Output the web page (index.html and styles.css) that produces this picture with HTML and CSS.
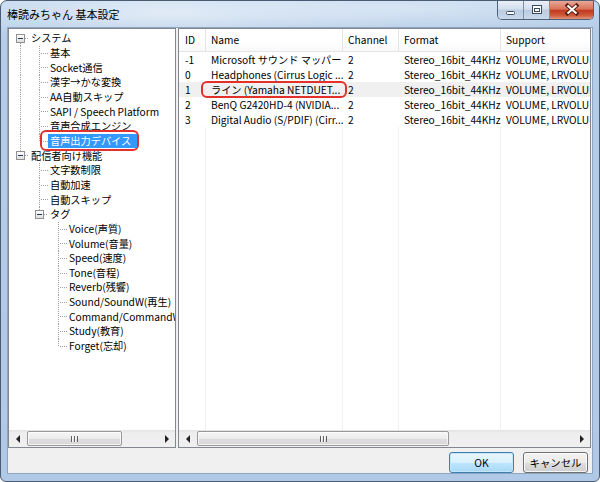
FILE: index.html
```html
<!DOCTYPE html>
<html lang="ja">
<head>
    <meta charset="UTF-8">
    <title>棒読みちゃん 基本設定</title>
    <link rel="stylesheet" href="styles.css">
</head>
<body>

    <div class="window">
        <div class="titlebar">
            <span class="title">棒読みちゃん 基本設定</span>
            <div class="caption-buttons">
                <span class="cb min">
                    <svg width="25" height="18"><rect x="8.5" y="10.5" width="8" height="3" rx="1" fill="#fff" stroke="#3a4b60"/></svg>
                </span>
                <span class="cb max">
                    <svg width="25" height="18"><rect x="8.5" y="4.5" width="9" height="8" fill="#fff" stroke="#3a4b60"/><rect x="10.5" y="7.5" width="5" height="3" fill="#fff" stroke="#3a4b60"/></svg>
                </span>
                <span class="cb close">
                    <svg width="44" height="18"><path d="M17.5 4.5 L26.5 12.5 M26.5 4.5 L17.5 12.5" stroke="#5b2317" stroke-width="4" stroke-linecap="square"/><path d="M17.5 4.5 L26.5 12.5 M26.5 4.5 L17.5 12.5" stroke="#fff" stroke-width="2"/></svg>
                </span>
            </div>
        </div>

        <div class="client">
            <div class="panes">
                <!-- ツリー -->
                <div class="pane tree-pane">
                    <div class="tree">
                        <div class="row"><span class="c box-first"><i class="box"></i></span><span class="label">システム</span></div>
                        <div class="row"><span class="c v"></span><span class="c t"></span><span class="label">基本</span></div>
                        <div class="row"><span class="c v"></span><span class="c t"></span><span class="label">Socket通信</span></div>
                        <div class="row"><span class="c v"></span><span class="c t"></span><span class="label">漢字→かな変換</span></div>
                        <div class="row"><span class="c v"></span><span class="c t"></span><span class="label">AA自動スキップ</span></div>
                        <div class="row"><span class="c v"></span><span class="c t"></span><span class="label">SAPI / Speech Platform</span></div>
                        <div class="row"><span class="c v"></span><span class="c t"></span><span class="label">音声合成エンジン</span></div>
                        <div class="row"><span class="c v"></span><span class="c l"></span><span class="mark"><span class="label selected">音声出力デバイス</span></span></div>
                        <div class="row"><span class="c box-last"><i class="box"></i></span><span class="label">配信者向け機能</span></div>
                        <div class="row"><span class="c"></span><span class="c t"></span><span class="label">文字数制限</span></div>
                        <div class="row"><span class="c"></span><span class="c t"></span><span class="label">自動加速</span></div>
                        <div class="row"><span class="c"></span><span class="c t"></span><span class="label">自動スキップ</span></div>
                        <div class="row"><span class="c"></span><span class="c box-last"><i class="box"></i></span><span class="label">タグ</span></div>
                        <div class="row"><span class="c"></span><span class="c"></span><span class="c t"></span><span class="label">Voice(声質)</span></div>
                        <div class="row"><span class="c"></span><span class="c"></span><span class="c t"></span><span class="label">Volume(音量)</span></div>
                        <div class="row"><span class="c"></span><span class="c"></span><span class="c t"></span><span class="label">Speed(速度)</span></div>
                        <div class="row"><span class="c"></span><span class="c"></span><span class="c t"></span><span class="label">Tone(音程)</span></div>
                        <div class="row"><span class="c"></span><span class="c"></span><span class="c t"></span><span class="label">Reverb(残響)</span></div>
                        <div class="row"><span class="c"></span><span class="c"></span><span class="c t"></span><span class="label">Sound/SoundW(再生)</span></div>
                        <div class="row"><span class="c"></span><span class="c"></span><span class="c t"></span><span class="label">Command/CommandW(コマンド)</span></div>
                        <div class="row"><span class="c"></span><span class="c"></span><span class="c t"></span><span class="label">Study(教育)</span></div>
                        <div class="row"><span class="c"></span><span class="c"></span><span class="c l"></span><span class="label">Forget(忘却)</span></div>
                    </div>
                    <div class="hscroll">
                        <span class="sb-arrow"><i class="tri left"></i></span>
                        <div class="sb-track"><span class="sb-thumb thumb-tree"><i class="grip"></i></span></div>
                        <span class="sb-arrow"><i class="tri right"></i></span>
                    </div>
                </div>

                <!-- デバイス一覧 -->
                <div class="pane list-pane">
                    <div class="listview">
                        <div class="lv-row lv-head">
                            <span class="cell id">ID</span>
                            <span class="cell">Name</span>
                            <span class="cell">Channel</span>
                            <span class="cell">Format</span>
                            <span class="cell">Support</span>
                        </div>
                        <div class="lv-row">
                            <span class="cell id">-1</span>
                            <span class="cell">Microsoft サウンド マッパー</span>
                            <span class="cell">2</span>
                            <span class="cell">Stereo_16bit_44KHz</span>
                            <span class="cell">VOLUME, LRVOLUME</span>
                        </div>
                        <div class="lv-row">
                            <span class="cell id">0</span>
                            <span class="cell">Headphones (Cirrus Logic ...</span>
                            <span class="cell">2</span>
                            <span class="cell">Stereo_16bit_44KHz</span>
                            <span class="cell">VOLUME, LRVOLUME</span>
                        </div>
                        <div class="lv-row hot">
                            <span class="cell id">1</span>
                            <span class="cell marked"><span class="mark-cell">ライン (Yamaha NETDUET...</span></span>
                            <span class="cell">2</span>
                            <span class="cell">Stereo_16bit_44KHz</span>
                            <span class="cell">VOLUME, LRVOLUME</span>
                        </div>
                        <div class="lv-row">
                            <span class="cell id">2</span>
                            <span class="cell">BenQ G2420HD-4 (NVIDIA...</span>
                            <span class="cell">2</span>
                            <span class="cell">Stereo_16bit_44KHz</span>
                            <span class="cell">VOLUME, LRVOLUME</span>
                        </div>
                        <div class="lv-row">
                            <span class="cell id">3</span>
                            <span class="cell">Digital Audio (S/PDIF) (Cirr...</span>
                            <span class="cell">2</span>
                            <span class="cell">Stereo_16bit_44KHz</span>
                            <span class="cell">VOLUME, LRVOLUME</span>
                        </div>
                        <div class="lv-row lv-fill">
                            <span class="cell"></span>
                            <span class="cell"></span>
                            <span class="cell"></span>
                            <span class="cell"></span>
                            <span class="cell"></span>
                        </div>
                    </div>
                    <div class="hscroll">
                        <span class="sb-arrow"><i class="tri left"></i></span>
                        <div class="sb-track"><span class="sb-thumb thumb-list"><i class="grip"></i></span></div>
                        <span class="sb-arrow"><i class="tri right"></i></span>
                    </div>
                </div>
            </div>

            <div class="footer">
                <button class="btn default">OK</button>
                <button class="btn">キャンセル</button>
            </div>
        </div>
    </div>

</body>
</html>
```

FILE: styles.css
```css
/* 基本設定ダイアログ (Windows 7 風) */
body {
    margin: 0;
    background: #fff;
    font-family: "Noto Sans CJK JP", "Liberation Sans", sans-serif;
    font-size: 10.2px;
    color: #000;
}

.window {
    width: 600px;
    height: 482px;
    box-sizing: border-box;
    border: 1px solid #4a5c72;
    border-radius: 7px 7px 6px 6px;
    background:
        radial-gradient(ellipse 260px 30px at 170px 12px, rgba(255, 255, 255, 0.55), rgba(255, 255, 255, 0)),
        radial-gradient(ellipse 200px 24px at 420px 8px, rgba(255, 255, 255, 0.35), rgba(255, 255, 255, 0)),
        linear-gradient(to bottom, #c3d8ef 0, #b6cde8 30px, #b0c9e7 100%);
    display: flex;
    flex-direction: column;
    overflow: hidden;
}

/* タイトルバー */
.titlebar {
    height: 26px;
    display: flex;
    align-items: flex-start;
    flex: none;
}

.title {
    padding: 5px 0 0 6px;
    font-size: 11px;
    line-height: 16px;
    color: #000;
}

.caption-buttons {
    margin-left: auto;
    margin-right: 5px;
    display: flex;
    border: 1px solid #4f6178;
    border-top: none;
    border-radius: 0 0 5px 5px;
    overflow: hidden;
}

.cb {
    display: block;
    height: 18px;
}

.cb svg {
    display: block;
}

.cb.min,
.cb.max {
    width: 25px;
    background: linear-gradient(to bottom, #e9eff7 0, #d3dfee 45%, #bccce0 50%, #c9d8ea 100%);
    border-right: 1px solid #7f90a6;
}

.cb.close {
    width: 43px;
    background: linear-gradient(to bottom, #e9a796 0, #d9735b 45%, #c2391f 52%, #cf5a3c 80%, #e5947a 100%);
}

/* クライアント領域 */
.client {
    flex: 1;
    margin: 0 6px 7px;
    border: 1px solid #8ea5c2;
    background: #f0f0f0;
    display: flex;
    flex-direction: column;
}

.panes {
    height: 420px;
    display: flex;
    gap: 2px;
    padding-right: 1px;
}

.pane {
    border: 1px solid #828790;
    background: #fff;
    display: flex;
    flex-direction: column;
    box-sizing: border-box;
    min-width: 0;
}

.tree-pane {
    width: 168px;
    flex: none;
}

.list-pane {
    flex: 1;
}

/* ツリー */
.tree {
    flex: 1;
    overflow: hidden;
    padding: 2px 0 0 1px;
}

.row {
    height: 14.67px;
    display: flex;
    align-items: center;
    white-space: nowrap;
}

.c {
    width: 19px;
    height: 100%;
    flex: none;
    display: flex;
    align-items: center;
    background-repeat: no-repeat;
}

.c.v {
    background-image: repeating-linear-gradient(to bottom, #a0a0a0 0 1px, transparent 1px 2px);
    background-position: 10px 0;
    background-size: 1px 100%;
}

.c.t {
    background-image:
        repeating-linear-gradient(to bottom, #a0a0a0 0 1px, transparent 1px 2px),
        repeating-linear-gradient(to right, #a0a0a0 0 1px, transparent 1px 2px);
    background-position: 10px 0, 12px 7px;
    background-size: 1px 100%, 7px 1px;
}

.c.l {
    background-image:
        repeating-linear-gradient(to bottom, #a0a0a0 0 1px, transparent 1px 2px),
        repeating-linear-gradient(to right, #a0a0a0 0 1px, transparent 1px 2px);
    background-position: 10px 0, 12px 7px;
    background-size: 1px 8px, 7px 1px;
}

.c.box-first {
    background-image:
        repeating-linear-gradient(to bottom, #a0a0a0 0 1px, transparent 1px 2px),
        repeating-linear-gradient(to right, #a0a0a0 0 1px, transparent 1px 2px);
    background-position: 10px 100%, 15px 7px;
    background-size: 1px 7px, 4px 1px;
}

.c.box-last {
    background-image:
        repeating-linear-gradient(to bottom, #a0a0a0 0 1px, transparent 1px 2px),
        repeating-linear-gradient(to right, #a0a0a0 0 1px, transparent 1px 2px);
    background-position: 10px 0, 15px 7px;
    background-size: 1px 4px, 4px 1px;
}

.box {
    display: block;
    width: 9px;
    height: 9px;
    box-sizing: border-box;
    margin-left: 6px;
    border: 1px solid #919191;
    background:
        linear-gradient(#1e395b, #1e395b) center / 5px 1px no-repeat,
        linear-gradient(to bottom, #fff, #dedede);
}

.label {
    padding: 0 2px;
    line-height: 14px;
    height: 14px;
}

.label.selected {
    background: #3399ff;
    color: #fff;
    padding-right: 6px;
}

/* 注釈の赤枠 */
.mark {
    display: flex;
    margin: -5px 0 -5px -8px;
    padding: 2px 0 1px 6px;
    border: 2px solid #e3302b;
    border-radius: 6px;
}

/* 一覧 */
.listview {
    flex: 1;
    display: flex;
    flex-direction: column;
    overflow: hidden;
}

.lv-row {
    display: grid;
    grid-template-columns: 27px 137px 56px 102px 200px;
    height: 15px;
    line-height: 15px;
    white-space: nowrap;
    flex: none;
}

.cell {
    padding-left: 5px;
    overflow: hidden;
}

.cell.id {
    padding-left: 6px;
}

.lv-head {
    height: 23px;
    line-height: 22px;
    background: linear-gradient(to bottom, #fff 0, #fff 60%, #f7f8fa 100%);
    border-bottom: 1px solid #e5e5e5;
    box-sizing: border-box;
}

.lv-head .cell {
    border-right: 1px solid #e5e5e5;
}

.lv-row.hot {
    background: #f0f0f0;
}

.cell.marked {
    overflow: visible;
}

.mark-cell {
    display: block;
    width: 146px;
    height: 17px;
    box-sizing: border-box;
    margin: -1px 0 0 -10px;
    padding-left: 8px;
    line-height: 13px;
    border: 2px solid #e3302b;
    border-radius: 6px;
}

.lv-fill {
    flex: 1;
}

.lv-fill .cell {
    border-right: 1px solid #f0f0f0;
}

/* 横スクロールバー */
.hscroll {
    height: 17px;
    flex: none;
    display: flex;
    background: linear-gradient(to bottom, #e3e3e3 0, #eeeeee 3px, #f0f0f0 100%);
}

.sb-arrow {
    width: 17px;
    flex: none;
    display: flex;
    align-items: center;
    justify-content: center;
}

.tri {
    display: block;
    width: 0;
    height: 0;
    border-top: 4px solid transparent;
    border-bottom: 4px solid transparent;
}

.tri.left {
    border-right: 4px solid #222;
}

.tri.right {
    border-left: 4px solid #222;
}

.sb-track {
    flex: 1;
    display: flex;
    padding: 1px 0;
}

.sb-thumb {
    box-sizing: border-box;
    margin-left: 1px;
    border: 1px solid #989898;
    border-radius: 2px;
    background: linear-gradient(to bottom, #f6f6f6 0, #ececec 50%, #dcdcdc 51%, #d9d9d9 100%);
    box-shadow: inset 0 0 0 1px rgba(255, 255, 255, 0.7);
    display: flex;
    align-items: center;
    justify-content: center;
}

.thumb-tree {
    width: 95px;
}

.thumb-list {
    width: 252px;
}

.grip {
    display: block;
    width: 7px;
    height: 6px;
    background: repeating-linear-gradient(to right, #606060 0 1px, #fafafa 1px 2px, transparent 2px 3px);
}

/* ボタン */
.footer {
    flex: 1;
    display: flex;
    justify-content: flex-end;
    align-items: flex-start;
    gap: 9px;
    padding: 4px 4px 0 0;
}

.btn {
    width: 65px;
    height: 21px;
    padding: 0;
    font-family: inherit;
    font-size: 10.4px;
    color: #000;
    border: 1px solid #707070;
    border-radius: 3px;
    background: linear-gradient(to bottom, #f2f2f2 0, #ebebeb 50%, #dddddd 51%, #cfcfcf 100%);
    box-shadow: inset 0 0 0 1px rgba(255, 255, 255, 0.8);
}

.btn.default {
    border-color: #3c7fb1;
    background: linear-gradient(to bottom, #eaf6fd 0, #d9f0fc 50%, #bee6fd 51%, #a7d9f5 100%);
    box-shadow: inset 0 0 0 1px #c4e5f6;
}
```
